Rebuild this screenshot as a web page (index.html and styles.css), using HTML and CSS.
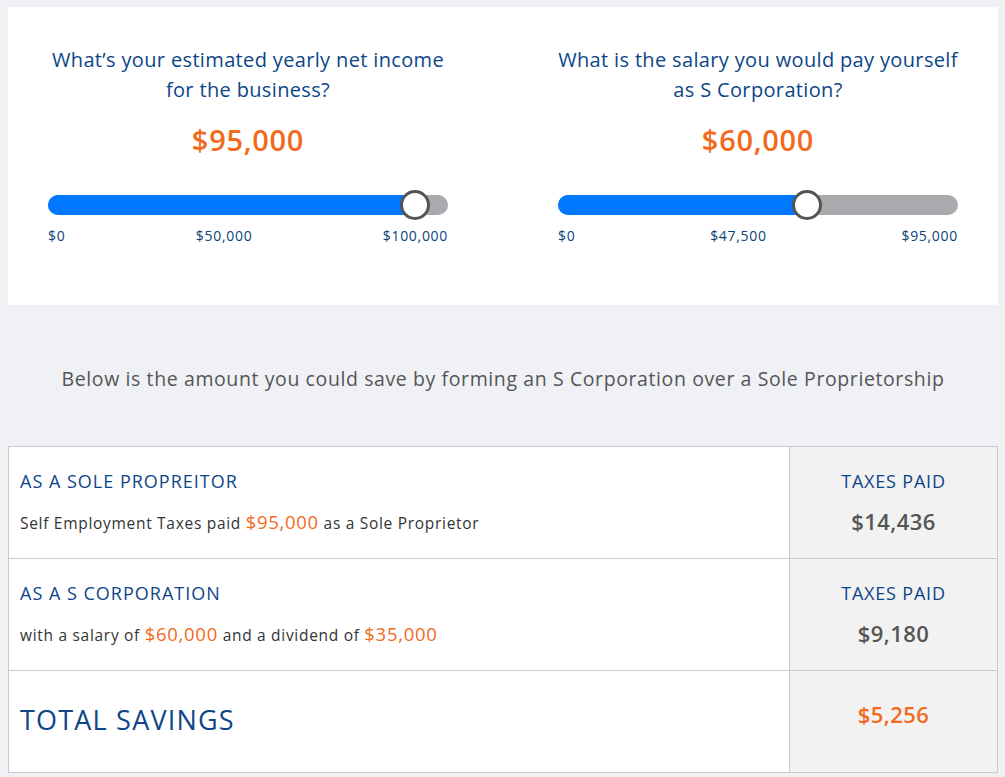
FILE: index.html
```html
<!DOCTYPE html>
<html lang="en">
<head>
  <meta charset="UTF-8" />
  <title>S Corporation Savings Calculator</title>
  <meta name="viewport" content="width=device-width, initial-scale=1.0" />
  <link rel="stylesheet" href="styles.css">
</head>
<body>

<div class="inputs-panel">
  <div class="question">
    <div class="question-title">What’s your estimated yearly net income for the business?</div>
    <div class="question-value">$95,000</div>
    <div class="slider">
      <div class="slider-fill" style="width: 366.5px"></div>
      <div class="slider-thumb" style="left: 351.5px"></div>
    </div>
    <div class="slider-labels">
      <span>$0</span><span>$50,000</span><span>$100,000</span>
    </div>
  </div>

  <div class="question">
    <div class="question-title">What is the salary you would pay yourself as S Corporation?</div>
    <div class="question-value">$60,000</div>
    <div class="slider">
      <div class="slider-fill" style="width: 248.7px"></div>
      <div class="slider-thumb" style="left: 233.7px"></div>
    </div>
    <div class="slider-labels">
      <span>$0</span><span>$47,500</span><span>$95,000</span>
    </div>
  </div>
</div>

<p class="summary-intro">Below is the amount you could save by forming an S Corporation over a Sole Proprietorship</p>

<div class="results">
  <div class="result-row">
    <div class="result-info">
      <div class="result-title">AS A SOLE PROPREITOR</div>
      <div class="result-desc">Self Employment Taxes paid <span class="amount">$95,000</span> as a Sole Proprietor</div>
    </div>
    <div class="result-taxes">
      <div class="taxes-label">TAXES PAID</div>
      <div class="taxes-value">$14,436</div>
    </div>
  </div>

  <div class="result-row">
    <div class="result-info">
      <div class="result-title">AS A S CORPORATION</div>
      <div class="result-desc">with a salary of <span class="amount">$60,000</span> and a dividend of <span class="amount">$35,000</span></div>
    </div>
    <div class="result-taxes">
      <div class="taxes-label">TAXES PAID</div>
      <div class="taxes-value">$9,180</div>
    </div>
  </div>

  <div class="result-row total-row">
    <div class="result-info">
      <div class="total-title">TOTAL SAVINGS</div>
    </div>
    <div class="result-taxes">
      <div class="total-value">$5,256</div>
    </div>
  </div>
</div>

</body>
</html>
```

FILE: styles.css
```css
body {
  font-family: 'Open Sans', 'Lato', sans-serif;
  background: #f0f1f5;
  color: #333;
  margin: 0;
  padding: 7px 7px 0 8px;
}

.inputs-panel {
  display: grid;
  grid-template-columns: 400px 400px;
  column-gap: 110px;
  background: white;
  padding: 38px 40px 0;
  height: 260px;
}

.question {
  text-align: center;
}

.question-title {
  font-size: 20px;
  line-height: 30px;
  letter-spacing: 0.35px;
  color: #0d4688;
}

.question-value {
  font-size: 29px;
  font-weight: 600;
  letter-spacing: 0.7px;
  color: #f26a1b;
  margin-top: 18px;
  line-height: 34px;
}

.slider {
  position: relative;
  height: 20px;
  margin-top: 38px;
  border-radius: 10px;
  background: #a8aaad;
}

.slider-fill {
  height: 20px;
  border-radius: 10px;
  background: #0078ff;
}

.slider-thumb {
  position: absolute;
  top: -5px;
  width: 24px;
  height: 24px;
  border: 3px solid #545454;
  border-radius: 50%;
  background: white;
}

.slider-labels {
  display: flex;
  justify-content: space-between;
  margin-top: 11px;
  font-size: 14px;
  letter-spacing: 0.7px;
  color: #0d3f7a;
}

.summary-intro {
  margin: 62px 0 0;
  text-align: center;
  font-size: 19.5px;
  line-height: 24px;
  letter-spacing: 0.6px;
  color: #555;
}

.results {
  margin-top: 55px;
  border: 1px solid #cbcbcb;
  background: white;
}

.result-row {
  display: grid;
  grid-template-columns: 1fr 208px;
  border-bottom: 1px solid #cbcbcb;
}

.result-row:last-child {
  border-bottom: none;
}

.result-info {
  padding: 23px 11px;
}

.result-title {
  font-size: 18px;
  line-height: 22px;
  letter-spacing: 1px;
  color: #0d4688;
}

.result-desc {
  margin-top: 18px;
  font-size: 15.5px;
  line-height: 24px;
  letter-spacing: 0.7px;
  color: #333;
}

.result-desc .amount {
  font-size: 18.5px;
  color: #f26a1b;
}

.result-taxes {
  background: #f2f2f2;
  border-left: 1px solid #cbcbcb;
  text-align: center;
  padding-top: 23px;
}

.taxes-label {
  font-size: 18px;
  line-height: 22px;
  letter-spacing: 0.8px;
  color: #0d4688;
}

.taxes-value {
  margin-top: 15px;
  font-size: 22px;
  font-weight: 600;
  line-height: 28px;
  letter-spacing: 0.4px;
  color: #555;
}

.total-row {
  height: 101px;
}

.total-row .result-info {
  padding-top: 32px;
}

.total-title {
  font-size: 27px;
  line-height: 34px;
  letter-spacing: 1.2px;
  color: #0d4688;
}

.total-row .result-taxes {
  padding-top: 29px;
}

.total-value {
  font-size: 22px;
  font-weight: 600;
  line-height: 28px;
  letter-spacing: 0.4px;
  color: #f26a1b;
}
```
